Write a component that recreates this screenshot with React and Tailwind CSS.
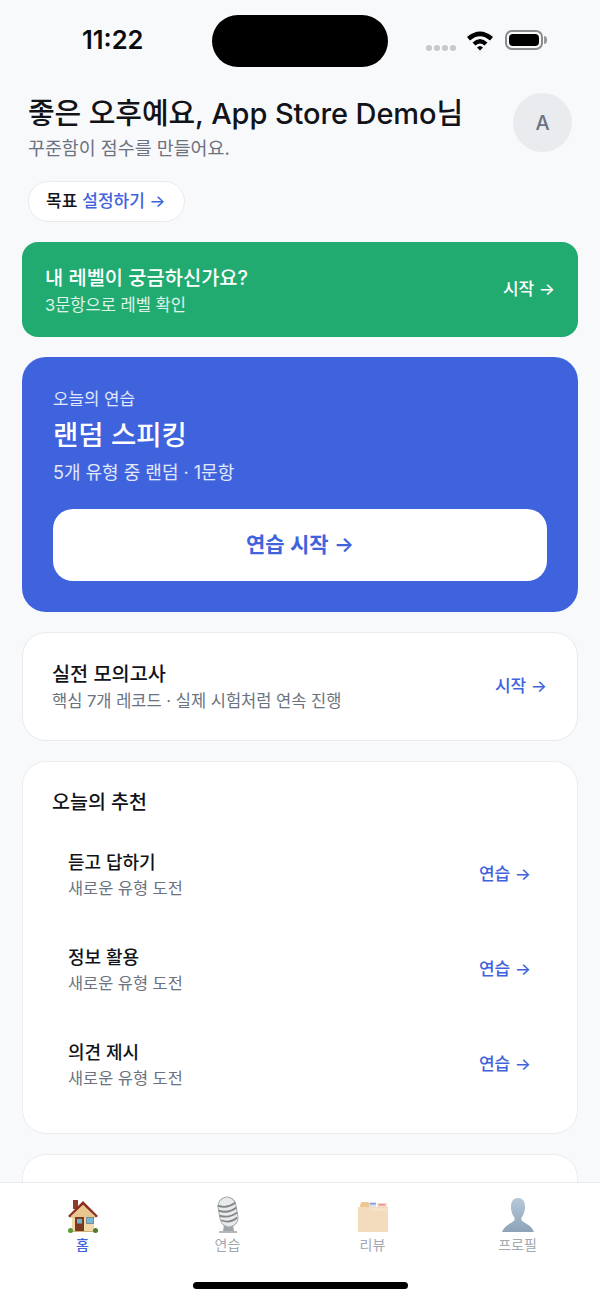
const FONT = "font-['Inter','Noto_Sans_CJK_KR',sans-serif]";

const HomeIcon = () => (
  <svg width="34" height="38" viewBox="0 0 34 38">
    <rect x="7" y="4" width="5" height="9" fill="#8f3a2c" />
    <path d="M6 17 L17 7 L28 17 V35 H6 Z" fill="#f3d8a8" />
    <path d="M2 20 L17 5 L32 20 L30 21.5 L17 9 L4 21.5 Z" fill="#8b2f22" />
    <path d="M17 9 L29 20 V22 H5 V20 Z" fill="#e9c58f" />
    <rect x="9" y="21" width="9" height="14" fill="#7b3a22" />
    <rect x="11" y="23" width="5" height="4.5" fill="#6fb3cf" />
    <rect x="20" y="21" width="8" height="7" fill="#7b8c96" />
    <rect x="21" y="22" width="6" height="5" fill="#79b9d6" />
    <path d="M6 35 H28 V36 H6 Z" fill="#cfae7c" />
    <circle cx="4.5" cy="34.5" r="2.5" fill="#5d9a34" />
    <circle cx="29.5" cy="34.5" r="2.5" fill="#4b7f2a" />
  </svg>
);

const MicIcon = () => (
  <svg width="34" height="38" viewBox="0 0 34 38">
    <path d="M13 29 H22 L23 35 H12 Z" fill="#9fa4a6" />
    <path d="M8 35 H26 V37 H8 Z" fill="#b4b8ba" />
    <g transform="rotate(-10 17 16)">
      <rect x="8" y="1" width="18" height="30" rx="9" fill="#e8eaeb" stroke="#a8acae" strokeWidth="1" />
      <path d="M8 8 Q17 13 26 8 M8 13 Q17 18 26 13 M8 18 Q17 23 26 18 M9 23 Q17 28 25 23" stroke="#82878a" strokeWidth="1.8" fill="none" />
    </g>
  </svg>
);

const FolderIcon = () => (
  <svg width="32" height="34" viewBox="0 0 32 34">
    <path d="M3 9 Q3 4 6 4 H10 Q13 4 13 9 Z" fill="#ecc78f" />
    <rect x="12" y="4" width="7" height="6" rx="1" fill="#dfe0ee" />
    <rect x="13" y="5" width="6" height="1.5" fill="#8b9be0" />
    <rect x="13" y="9" width="6" height="1.5" fill="#8b9be0" />
    <rect x="20" y="5" width="10" height="5" rx="1" fill="#f3d9cd" />
    <rect x="22" y="6" width="6" height="1.5" fill="#ee8e84" />
    <rect x="23" y="10" width="7" height="2" fill="#ee8e84" />
    <path d="M1 9 H31 V34 H1 Z" fill="#f2dcbd" />
    <path d="M14 10 H31 V13 H14 Z" fill="#f5e2c8" />
  </svg>
);

const PersonIcon = () => (
  <svg width="34" height="36" viewBox="0 0 34 36">
    <defs>
      <linearGradient id="person" x1="0" y1="0" x2="0" y2="1">
        <stop offset="0" stopColor="#b6c9db" />
        <stop offset="1" stopColor="#8ca3b8" />
      </linearGradient>
    </defs>
    <path
      d="M17 1 C11.5 1 10 5.5 10 10 C10 15 12 19 13.5 20.5 V23 C13 25.5 4 27 1 35 H33 C30 27 21 25.5 20.5 23 V20.5 C22 19 24 15 24 10 C24 5.5 22.5 1 17 1 Z"
      fill="url(#person)"
    />
  </svg>
);

const StatusBar = () => (
  <div className="relative h-[70px] shrink-0">
    <span className="absolute left-[82px] top-[25px] text-[25.5px] leading-[30px] font-semibold text-[#0b0b0b]">11:22</span>
    <div className="absolute left-[212px] top-[15px] h-[52px] w-[176px] rounded-full bg-black" />
    <div className="absolute left-[426px] top-[45px] flex gap-[2px]">
      <span className="h-[6px] w-[6px] rounded-full bg-[#c8c9cc]" />
      <span className="h-[6px] w-[6px] rounded-full bg-[#c8c9cc]" />
      <span className="h-[6px] w-[6px] rounded-full bg-[#c8c9cc]" />
      <span className="h-[6px] w-[6px] rounded-full bg-[#c8c9cc]" />
    </div>
    <svg className="absolute left-[466px] top-[29px]" width="28" height="22" viewBox="0 0 28 22">
      <path d="M1 8 Q14 -3 27 8 L24 11.5 Q14 3 4 11.5 Z" fill="#000" />
      <path d="M6.5 13.5 Q14 6.5 21.5 13.5 L18.5 16.5 Q14 12.5 9.5 16.5 Z" fill="#000" />
      <path d="M11 18.5 Q14 15.5 17 18.5 L14 21.5 Z" fill="#000" />
    </svg>
    <div className="absolute left-[505px] top-[30px] flex h-[20px] w-[38px] rounded-[7px] border-2 border-[#8c8c8c] p-[2px]">
      <div className="flex-1 rounded-[4px] bg-black" />
    </div>
    <div className="absolute left-[544px] top-[36px] h-[8px] w-[3px] rounded-r-full bg-[#9a9a9a]" />
  </div>
);

const RECOMMENDED = [
  { title: '듣고 답하기', sub: '새로운 유형 도전' },
  { title: '정보 활용', sub: '새로운 유형 도전' },
  { title: '의견 제시', sub: '새로운 유형 도전' },
];

const NAV = [
  { label: '홈', icon: <HomeIcon />, active: true },
  { label: '연습', icon: <MicIcon /> },
  { label: '리뷰', icon: <FolderIcon /> },
  { label: '프로필', icon: <PersonIcon /> },
];

export default function App() {
  return (
    <div className={`${FONT} flex h-[1300px] w-[600px] flex-col overflow-hidden bg-[#f8f9fb]`}>
      <div className="flex-1 overflow-hidden">
        <StatusBar />

        {/* Greeting */}
        <div className="flex items-start justify-between pl-[28px] pr-[28px] pt-[23px]">
          <div>
            <h1 className="text-[29px] leading-[42px] font-medium text-[#111318] tracking-[-0.1px]">좋은 오후예요, App Store Demo님</h1>
            <p className="text-[18.4px] leading-[27px] text-[#6b7280]">꾸준함이 점수를 만들어요.</p>
          </div>
          <div className="flex h-[59px] w-[59px] items-center justify-center rounded-full bg-[#e9ebef] text-[20px] font-medium text-[#6b7280]">A</div>
        </div>

        <div className="mt-[19px] pl-[28px]">
          <div className="inline-flex h-[41px] items-center gap-[5px] rounded-full border border-[#e8eaee] bg-white pl-[17px] pr-[18px] text-[17px] font-medium text-[#111318]">
            <span>목표</span>
            <span className="text-[#3f63dd]">설정하기 →</span>
          </div>
        </div>

        <div className="mt-[20px] flex flex-col gap-[20px] px-[22px]">
          {/* Level test */}
          <div className="flex h-[95px] items-center justify-between rounded-[16px] bg-[#21ab70] px-[23px] text-white">
            <div className="pt-[1px]">
              <div className="text-[19.8px] leading-[28px] font-medium">내 레벨이 궁금하신가요?</div>
              <div className="mt-[1px] text-[16.5px] leading-[24px] text-white/85">3문항으로 레벨 확인</div>
            </div>
            <div className="text-[17px] font-medium">시작 →</div>
          </div>

          {/* Today's practice */}
          <div className="h-[255px] rounded-[24px] bg-[#3f63dd] px-[31px] pt-[30px] text-white">
            <div className="text-[16.8px] leading-[24px] text-white/85">오늘의 연습</div>
            <div className="mt-[3px] text-[27.5px] leading-[42px] font-medium">랜덤 스피킹</div>
            <div className="mt-[4px] text-[18px] leading-[26px] text-white/85">5개 유형 중 랜덤 · 1문항</div>
            <div className="mt-[23px] flex h-[72px] items-center justify-center rounded-[20px] bg-white text-[21px] font-semibold text-[#3f63dd]">연습 시작 →</div>
          </div>

          {/* Mock exam */}
          <div className="flex h-[109px] items-center justify-between rounded-[24px] border border-[#e8eaee] bg-white pl-[29px] pr-[30px]">
            <div>
              <div className="text-[19.7px] leading-[28px] font-medium text-[#111318]">실전 모의고사</div>
              <div className="mt-[1px] text-[16.5px] leading-[24px] text-[#6b7280]">핵심 7개 레코드 · 실제 시험처럼 연속 진행</div>
            </div>
            <div className="text-[17px] font-medium text-[#3f63dd]">시작 →</div>
          </div>

          {/* Recommendations */}
          <div className="h-[373px] rounded-[24px] border border-[#eaecf0] bg-white pl-[29px] pr-[46px] pt-[26px]">
            <div className="text-[19.5px] leading-[28px] font-medium text-[#111318]">오늘의 추천</div>
            <div className="mt-[11px] flex flex-col">
              {RECOMMENDED.map((item) => (
                <div key={item.title} className="flex h-[95px] items-center justify-between pl-[16px]">
                  <div>
                    <div className="text-[18px] leading-[26px] font-medium text-[#111318]">{item.title}</div>
                    <div className="text-[16.4px] leading-[24px] text-[#6b7280]">{item.sub}</div>
                  </div>
                  <div className="text-[17px] font-medium text-[#3f63dd]">연습 →</div>
                </div>
              ))}
            </div>
          </div>

          <div className="h-[120px] rounded-[24px] border border-[#eaecf0] bg-white" />
        </div>
      </div>

      {/* Bottom tabs */}
      <div className="relative h-[118px] shrink-0 border-t border-[#e8eaee] bg-white">
        <div className="flex px-[10px] pt-[14px]">
          {NAV.map((tab) => (
            <div key={tab.label} className="flex flex-1 flex-col items-center">
              <div className="flex h-[36px] items-center justify-center">{tab.icon}</div>
              <span className={`mt-[1px] text-[14px] leading-[22px] ${tab.active ? 'font-medium text-[#3f63dd]' : 'text-[#a3a8b1]'}`}>{tab.label}</span>
            </div>
          ))}
        </div>
        <div className="absolute bottom-[11px] left-[193px] h-[7px] w-[215px] rounded-full bg-black" />
      </div>
    </div>
  );
}
